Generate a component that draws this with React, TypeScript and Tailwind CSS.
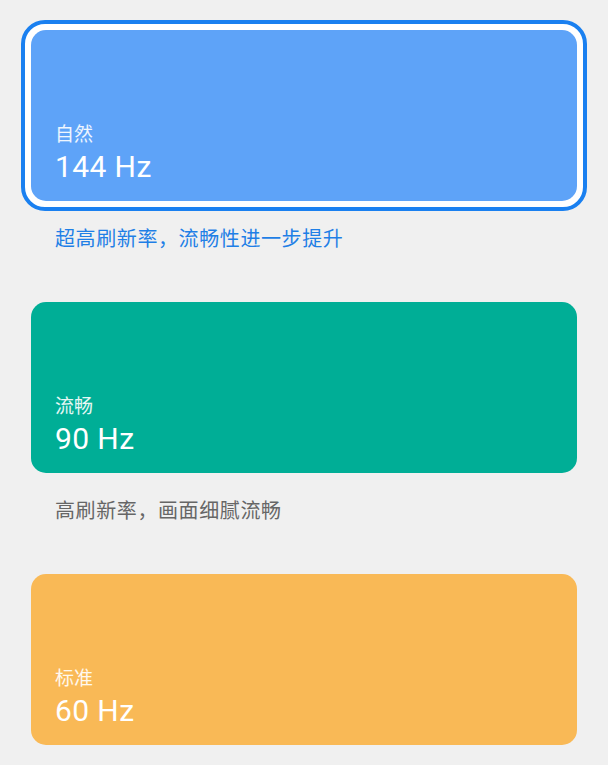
import React, { useState } from "react";

type RateMode = {
  id: string;
  label: string;
  rate: string;
  desc: string;
  color: string;
};

const modes: RateMode[] = [
  { id: "natural", label: "自然", rate: "144 Hz", desc: "超高刷新率，流畅性进一步提升", color: "bg-[#5ea3f8]" },
  { id: "smooth", label: "流畅", rate: "90 Hz", desc: "高刷新率，画面细腻流畅", color: "bg-[#00ae96]" },
  { id: "standard", label: "标准", rate: "60 Hz", desc: "", color: "bg-[#f9b956]" },
];

const cjk = "font-['Roboto','Noto_Sans_CJK_SC',sans-serif]";

export default function App() {
  const [selected, setSelected] = useState("natural");

  return (
    <div className={`min-h-screen bg-[#f0f0f0] px-[21px] pt-[20px] ${cjk}`}>
      <div className="flex flex-col">
        {modes.map((mode) => {
          const active = mode.id === selected;
          return (
            <div key={mode.id} className="flex flex-col">
              {/* Selection ring: blue stroke with a white inset gap */}
              <button
                onClick={() => setSelected(mode.id)}
                className={`rounded-[24px] border-[4px] p-[6px] text-left cursor-pointer ${
                  active ? "border-[#1a80f0] bg-white" : "border-transparent bg-transparent"
                }`}
              >
                <div
                  className={`h-[171px] rounded-[15px] ${mode.color} flex flex-col justify-end pl-[24px] pb-[19px] text-white`}
                >
                  <span className="text-[19px] leading-[22px] mb-[6px] text-white/90">{mode.label}</span>
                  <span className="text-[30px] leading-[30px] font-normal tracking-[0.4px]">{mode.rate}</span>
                </div>
              </button>

              {mode.desc && (
                <p
                  className={`mt-[14px] mb-[39px] pl-[34px] text-[20px] leading-[28px] tracking-[0.6px] ${
                    active ? "text-[#1f7fe6]" : "text-[#666666]"
                  }`}
                >
                  {mode.desc}
                </p>
              )}
            </div>
          );
        })}
      </div>
    </div>
  );
}
